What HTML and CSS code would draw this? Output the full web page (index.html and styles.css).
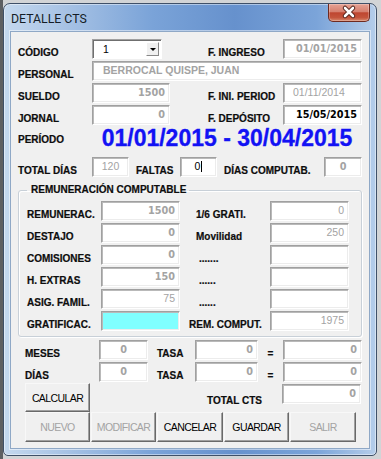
FILE: index.html
```html
<!DOCTYPE html>
<html lang="es">
<head>
  <meta charset="UTF-8">
  <title>Detalle CTS</title>
  <link rel="stylesheet" href="styles.css">
</head>
<body>
  <div class="window">
    <div class="titlebar">
      <span class="title">DETALLE CTS</span>
      <span class="close">
        <svg width="42" height="18" viewBox="0 0 42 18">
          <path d="M17 5 L25 13 M25 5 L17 13" stroke="#4a1a12" stroke-width="4.5" stroke-linecap="round"/>
          <path d="M17 5 L25 13 M25 5 L17 13" stroke="#ffffff" stroke-width="2.6" stroke-linecap="round"/>
        </svg>
      </span>
    </div>

    <div class="client">
      <!-- datos del trabajador -->
      <div class="head-grid">
        <span class="lbl">CÓDIGO</span>
        <div class="combo">
          <span class="combo-val">1</span>
          <span class="combo-btn"><span class="arrow"></span></span>
        </div>
        <span></span>
        <span class="lbl">F. INGRESO</span>
        <div class="fld bold right">01/01/2015</div>

        <span class="lbl">PERSONAL</span>
        <div class="fld wide name">BERROCAL QUISPE, JUAN</div>

        <span class="lbl">SUELDO</span>
        <div class="fld bold right">1500</div>
        <span></span>
        <span class="lbl">F. INI. PERIOD</span>
        <div class="fld left-pad">01/11/2014</div>

        <span class="lbl">JORNAL</span>
        <div class="fld bold right">0</div>
        <span></span>
        <span class="lbl">F. DEPÓSITO</span>
        <div class="fld bold right dark">15/05/2015</div>

        <span class="lbl period-lbl">PERÍODO</span>
        <div class="period">01/01/2015 - 30/04/2015</div>
      </div>

      <div class="days-row">
        <span class="lbl w-total">TOTAL DÍAS</span>
        <div class="fld center w37">120</div>
        <span class="lbl w-faltas">FALTAS</span>
        <div class="fld center w37 dark"><span>0</span><span class="caret"></span></div>
        <span class="lbl w-comp">DÍAS COMPUTAB.</span>
        <div class="fld bold center w38">0</div>
      </div>

      <!-- remuneración -->
      <fieldset class="group">
        <legend>REMUNERACIÓN COMPUTABLE</legend>
        <div class="group-grid">
          <span class="lbl">REMUNERAC.</span>
          <div class="fld bold right">1500</div>
          <span></span>
          <span class="lbl">1/6 GRATI.</span>
          <div class="fld right">0</div>

          <span class="lbl">DESTAJO</span>
          <div class="fld bold right">0</div>
          <span></span>
          <span class="lbl">Movilidad</span>
          <div class="fld right">250</div>

          <span class="lbl">COMISIONES</span>
          <div class="fld bold right">0</div>
          <span></span>
          <span class="lbl dots">.......</span>
          <div class="fld"></div>

          <span class="lbl">H. EXTRAS</span>
          <div class="fld bold right">150</div>
          <span></span>
          <span class="lbl dots">......</span>
          <div class="fld"></div>

          <span class="lbl">ASIG. FAMIL.</span>
          <div class="fld right">75</div>
          <span></span>
          <span class="lbl dots">......</span>
          <div class="fld"></div>

          <span class="lbl">GRATIFICAC.</span>
          <div class="fld cyan"></div>
          <span></span>
          <span class="lbl shift">REM. COMPUT.</span>
          <div class="fld right">1975</div>
        </div>
      </fieldset>

      <!-- cálculo -->
      <div class="calc-grid">
        <span class="lbl">MESES</span>
        <div class="fld bold center">0</div>
        <span class="lbl tasa">TASA</span>
        <div class="fld bold right">0</div>
        <span class="lbl eq">=</span>
        <div class="fld bold right">0</div>

        <span class="lbl">DÍAS</span>
        <div class="fld bold center">0</div>
        <span class="lbl tasa">TASA</span>
        <div class="fld bold right">0</div>
        <span class="lbl eq">=</span>
        <div class="fld bold right">0</div>
      </div>

      <div class="total-row">
        <button class="btn calc">CALCULAR</button>
        <span class="lbl total-lbl">TOTAL CTS</span>
        <div class="fld bold right total-fld">0</div>
      </div>

      <div class="btn-row">
        <button class="btn off">NUEVO</button>
        <button class="btn off">MODIFICAR</button>
        <button class="btn w66">CANCELAR</button>
        <button class="btn">GUARDAR</button>
        <button class="btn off w66">SALIR</button>
      </div>
    </div>
  </div>
</body>
</html>
```

FILE: styles.css
```css
* {
  box-sizing: border-box;
}
body {
  margin: 0;
  width: 381px;
  height: 459px;
  overflow: hidden;
  background: linear-gradient(to right, #5d5f62 0, #5d5f62 3px, #d2d4d6 3px);
  font-family: "Liberation Sans", Arial, sans-serif;
}

/* ventana */
.window {
  margin: 3px 0 0 3px;
  width: 374px;
  height: 453px;
  padding: 0 6px 6px 6px;
  border: 1px solid #3f5068;
  border-radius: 7px 7px 5px 5px;
  background: linear-gradient(to right, #c4d8ee 0%, #a8c3e5 16%, #7aa3d8 40%, #6691cd 62%, #7ba4d9 84%, #b5cdea 100%);
  box-shadow: inset 0 0 0 1px rgba(255,255,255,0.45);
}
.titlebar {
  height: 27px;
  display: flex;
  justify-content: space-between;
  align-items: flex-start;
}
.title {
  align-self: center;
  margin: 2px 0 0 1px;
  font-family: Roboto, "Liberation Sans", sans-serif;
  font-size: 12.3px;
  color: #141c26;
}
.close {
  width: 42px;
  height: 18px;
  border: 1px solid #6e2a20;
  border-top: none;
  border-radius: 0 0 5px 5px;
  background: linear-gradient(#e6a294 0%, #d6806f 45%, #bf4630 52%, #c4553c 80%, #d88a6f 100%);
  box-shadow: inset 0 0 0 1px rgba(255,255,255,0.25);
}
.close svg {
  display: block;
  margin: -1px 0 0 -1px;
}

/* área cliente */
.client {
  height: 418px;
  padding: 7px 0 0 7px;
  border: 1px solid #8fa8c6;
  background: #f0f0f0;
  box-shadow: 0 0 0 1px rgba(255,255,255,0.5);
}

.lbl {
  align-self: end;
  line-height: 13px;
  font-size: 10px;
  font-weight: bold;
  color: #0d0d0d;
  -webkit-text-stroke: 0.2px #0d0d0d;
  white-space: nowrap;
}

/* campos */
.fld {
  height: 20px;
  padding: 0 4px;
  border: 1px solid;
  border-color: #a0a0a0 #ffffff #ffffff #a0a0a0;
  box-shadow: inset 1px 1px 0 #b9b9b9, inset -1px -1px 0 #ececec;
  background: #fff;
  font-size: 10.5px;
  line-height: 17px;
  color: #a3a3a3;
  white-space: nowrap;
  overflow: hidden;
}
.fld.bold {
  font-family: "DejaVu Sans", sans-serif;
  font-size: 9.7px;
  font-weight: bold;
}
.fld.right {
  text-align: right;
}
.fld.center {
  text-align: center;
}
.fld.dark {
  color: #000;
}
.fld.left-pad {
  padding-left: 9px;
}
.fld.cyan {
  background: #80ffff;
}
.caret {
  display: inline-block;
  width: 1px;
  height: 11px;
  margin-left: 1px;
  vertical-align: -2px;
  background: #000;
}

.head-grid {
  display: grid;
  grid-template-columns: 74px 78px 38px 75px 79px;
  grid-template-rows: 20px 20px 20px 20px 28px;
  row-gap: 2px;
}
.combo {
  width: 70px;
  height: 20px;
  display: flex;
  justify-content: space-between;
  padding: 2px 2px 2px 10px;
  border: 1px solid;
  border-color: #a0a0a0 #ffffff #ffffff #a0a0a0;
  box-shadow: inset 1px 1px 0 #6f6f6f;
  background: #fff;
  font-size: 10.5px;
  line-height: 15px;
  color: #000;
}
.combo-btn {
  width: 13px;
  display: flex;
  align-items: center;
  justify-content: center;
  border: 1px solid;
  border-color: #fff #888 #888 #fff;
  background: #f0f0f0;
}
.arrow {
  width: 0;
  height: 0;
  border-left: 3px solid transparent;
  border-right: 3px solid transparent;
  border-top: 3px solid #000;
}
.fld.wide {
  grid-column: 2 / 6;
}
.fld.name {
  padding-left: 10px;
  font-weight: bold;
}
.period-lbl {
  align-self: start;
  margin-top: 6px;
}
.period {
  grid-column: 2 / 6;
  align-self: start;
  text-align: center;
  font-size: 23px;
  line-height: 22px;
  font-weight: bold;
  color: #1212f4;
  -webkit-text-stroke: 0.3px #1212f4;
}

.days-row {
  display: flex;
  height: 20px;
  margin-top: 2px;
}
.w-total {
  width: 74px;
}
.w-faltas {
  width: 44px;
  margin-left: 7px;
}
.w-comp {
  width: 100px;
  margin-left: 7px;
}
.w37 {
  width: 37px;
}
.w38 {
  width: 38px;
}

/* grupo remuneración */
.group {
  width: 344px;
  margin: 7px 0 0 0;
  padding: 5px 12px 5px 8px;
  border: 1px solid #c8d0d8;
  border-radius: 3px;
  box-shadow: inset 1px 1px 0 #fff, 1px 1px 0 #fff;
}
.group legend {
  padding: 0 3px 0 4px;
  font-size: 10px;
  line-height: 12px;
  font-weight: bold;
  color: #0d0d0d;
  -webkit-text-stroke: 0.2px #0d0d0d;
}
.group-grid {
  display: grid;
  grid-template-columns: 74px 79px 16px 74px 79px;
  grid-auto-rows: 20px;
  row-gap: 2px;
}
.dots {
  padding-left: 3px;
}
.shift {
  margin-left: -7px;
}

/* cálculo */
.calc-grid {
  display: grid;
  grid-template-columns: 74px 49px 47px 63px 25px 79px;
  grid-auto-rows: 20px;
  row-gap: 2px;
  margin: 3px 0 0 7px;
}
.tasa {
  padding-left: 9px;
}
.eq {
  text-align: center;
}

.total-row {
  display: flex;
  height: 29px;
  margin: 1px 0 0 7px;
}
.total-lbl {
  margin: 0 20px 0 auto;
  padding-bottom: 5px;
}
.total-fld {
  width: 79px;
  margin: 1px 8px 0 0;
}

/* botones */
.btn {
  width: 65px;
  height: 29px;
  padding: 0;
  border: 1px solid;
  border-color: #f8f8f8 #696969 #696969 #f8f8f8;
  box-shadow: inset -1px -1px 0 #a0a0a0;
  background: #f0f0f0;
  font-family: "Liberation Sans", Arial, sans-serif;
  font-size: 10.5px;
  letter-spacing: -0.6px;
  color: #000;
}
.btn.off {
  color: #a3a3a3;
}
.btn.w66 {
  width: 66px;
}
.btn-row {
  display: flex;
  gap: 1px;
  margin-left: 7px;
}
.btn-row .btn {
  height: 30px;
}
```
